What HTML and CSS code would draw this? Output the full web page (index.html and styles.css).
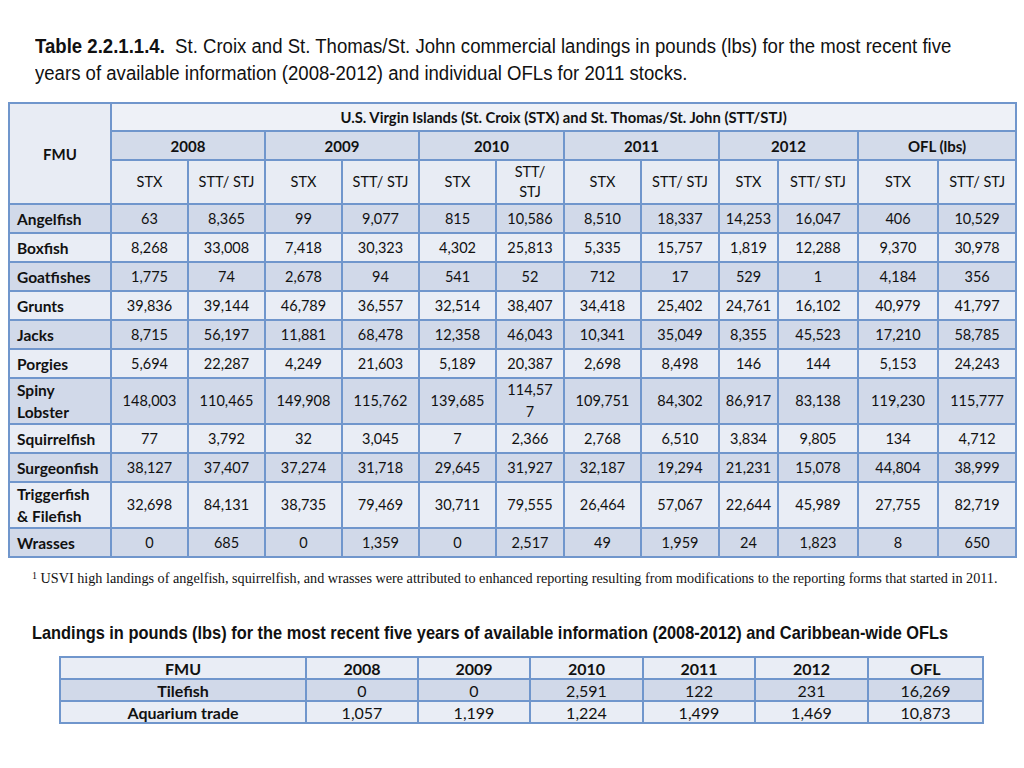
FILE: index.html
```html
<!DOCTYPE html>
<html>
<head>
<meta charset="utf-8">
<link rel="stylesheet" href="styles.css">
</head>
<body>
<div class="page">
  <h1 class="title"><span class="line"><b>Table 2.2.1.1.4.</b>&nbsp; St. Croix and St. Thomas/St. John commercial landings in pounds (lbs) for the most recent five</span><span class="line">years of available information (2008-2012) and individual OFLs for 2011 stocks.</span></h1>

  <table class="main">
    <colgroup>
      <col class="c-fmu"><col class="c77"><col class="c77"><col class="c77"><col class="c77"><col class="c77"><col class="c68"><col class="c77"><col class="c78"><col class="c59"><col class="c80"><col class="c80"><col class="c78">
    </colgroup>
    <tr class="r-top">
      <td class="fmu-head" rowspan="3">FMU</td>
      <td class="usvi" colspan="12">U.S. Virgin Islands (St. Croix (STX) and St. Thomas/St. John (STT/STJ)</td>
    </tr>
    <tr class="r-year">
      <td colspan="2">2008</td><td colspan="2">2009</td><td colspan="2">2010</td><td colspan="2">2011</td><td colspan="2">2012</td><td colspan="2">OFL (lbs)</td>
    </tr>
    <tr class="r-sub">
      <td>STX</td><td>STT/ STJ</td><td>STX</td><td>STT/ STJ</td><td>STX</td><td class="wrap">STT/ STJ</td><td>STX</td><td>STT/ STJ</td><td>STX</td><td>STT/ STJ</td><td>STX</td><td>STT/ STJ</td>
    </tr>
    <tr class="dark"><th>Angelfish</th><td>63</td><td>8,365</td><td>99</td><td>9,077</td><td>815</td><td>10,586</td><td>8,510</td><td>18,337</td><td>14,253</td><td>16,047</td><td>406</td><td>10,529</td></tr>
    <tr class="light"><th>Boxfish</th><td>8,268</td><td>33,008</td><td>7,418</td><td>30,323</td><td>4,302</td><td>25,813</td><td>5,335</td><td>15,757</td><td>1,819</td><td>12,288</td><td>9,370</td><td>30,978</td></tr>
    <tr class="dark"><th>Goatfishes</th><td>1,775</td><td>74</td><td>2,678</td><td>94</td><td>541</td><td>52</td><td>712</td><td>17</td><td>529</td><td>1</td><td>4,184</td><td>356</td></tr>
    <tr class="light"><th>Grunts</th><td>39,836</td><td>39,144</td><td>46,789</td><td>36,557</td><td>32,514</td><td>38,407</td><td>34,418</td><td>25,402</td><td>24,761</td><td>16,102</td><td>40,979</td><td>41,797</td></tr>
    <tr class="dark"><th>Jacks</th><td>8,715</td><td>56,197</td><td>11,881</td><td>68,478</td><td>12,358</td><td>46,043</td><td>10,341</td><td>35,049</td><td>8,355</td><td>45,523</td><td>17,210</td><td>58,785</td></tr>
    <tr class="light"><th>Porgies</th><td>5,694</td><td>22,287</td><td>4,249</td><td>21,603</td><td>5,189</td><td>20,387</td><td>2,698</td><td>8,498</td><td>146</td><td>144</td><td>5,153</td><td>24,243</td></tr>
    <tr class="dark tall"><th>Spiny<br>Lobster</th><td>148,003</td><td>110,465</td><td>149,908</td><td>115,762</td><td>139,685</td><td class="w">114,577</td><td>109,751</td><td>84,302</td><td>86,917</td><td>83,138</td><td>119,230</td><td>115,777</td></tr>
    <tr class="light"><th>Squirrelfish</th><td>77</td><td>3,792</td><td>32</td><td>3,045</td><td>7</td><td>2,366</td><td>2,768</td><td>6,510</td><td>3,834</td><td>9,805</td><td>134</td><td>4,712</td></tr>
    <tr class="dark"><th>Surgeonfish</th><td>38,127</td><td>37,407</td><td>37,274</td><td>31,718</td><td>29,645</td><td>31,927</td><td>32,187</td><td>19,294</td><td>21,231</td><td>15,078</td><td>44,804</td><td>38,999</td></tr>
    <tr class="light tall"><th>Triggerfish<br>&amp; Filefish</th><td>32,698</td><td>84,131</td><td>38,735</td><td>79,469</td><td>30,711</td><td>79,555</td><td>26,464</td><td>57,067</td><td>22,644</td><td>45,989</td><td>27,755</td><td>82,719</td></tr>
    <tr class="dark"><th>Wrasses</th><td>0</td><td>685</td><td>0</td><td>1,359</td><td>0</td><td>2,517</td><td>49</td><td>1,959</td><td>24</td><td>1,823</td><td>8</td><td>650</td></tr>
  </table>

  <p class="note"><sup>1</sup> USVI high landings of angelfish, squirrelfish, and wrasses were attributed to enhanced reporting resulting from modifications to the reporting forms that started in 2011.</p>

  <h2 class="sub-title"><span class="line">Landings in pounds (lbs) for the most recent five years of available information (2008-2012) and Caribbean-wide OFLs</span></h2>

  <table class="small">
    <colgroup>
      <col class="s-fmu"><col class="s112"><col class="s112"><col class="s113"><col class="s112"><col class="s113"><col class="s115">
    </colgroup>
    <tr class="light head"><td>FMU</td><td>2008</td><td>2009</td><td>2010</td><td>2011</td><td>2012</td><td>OFL</td></tr>
    <tr class="dark"><th>Tilefish</th><td>0</td><td>0</td><td>2,591</td><td>122</td><td>231</td><td>16,269</td></tr>
    <tr class="light"><th>Aquarium trade</th><td>1,057</td><td>1,199</td><td>1,224</td><td>1,499</td><td>1,469</td><td>10,873</td></tr>
  </table>
</div>
</body>
</html>
```

FILE: styles.css
```css
html, body {
  margin: 0;
  padding: 0;
  background: #ffffff;
}

.page {
  width: 1024px;
  height: 768px;
  overflow: hidden;
  padding-top: 33px;
  box-sizing: border-box;
}

.title {
  margin: 0 0 0 35px;
  font-family: "Liberation Sans", Arial, sans-serif;
  font-weight: normal;
  font-size: 20px;
  line-height: 27px;
  color: #111111;
}

.title .line {
  display: block;
  white-space: nowrap;
  transform: scaleX(0.929);
  transform-origin: left center;
}

.title b {
  font-weight: bold;
}

table {
  border-collapse: collapse;
  table-layout: fixed;
  font-family: Lato, "Open Sans", sans-serif;
  color: #111111;
}

.main {
  margin: 15px 0 0 8px;
  width: 1007px;
  font-size: 14.5px;
}

.main td, .main th {
  border: 2px solid #7096cc;
  text-align: center;
  vertical-align: middle;
  padding: 0 3px;
  line-height: 22px;
}

.main th {
  text-align: left;
  font-weight: bold;
  font-size: 15.5px;
  padding-left: 7px;
  line-height: 22px;
}

.main td.w {
  padding: 0 9px;
  word-break: break-all;
}

.main td.wrap {
  padding: 0 9px;
}

.c-fmu { width: 102px; }
.c77 { width: 77px; }
.c68 { width: 68px; }
.c78 { width: 78px; }
.c59 { width: 59px; }
.c80 { width: 80px; }

.r-top td { height: 26px; }
.r-year td { height: 27px; font-weight: bold; font-size: 15px; background: #d3dbea; }
.r-sub td { height: 42px; line-height: 20px; background: #e8ecf4; }

.fmu-head {
  background: #e8ecf4;
  font-weight: bold;
  font-size: 15px;
}

.usvi {
  background: #eef1f7;
  font-weight: bold;
  font-size: 14.8px;
}

.main tr.dark td, .main tr.dark th { background: #d1d9e9; }
.main tr.light td, .main tr.light th { background: #e9edf5; }

.main tr.dark, .main tr.light { height: 29px; }
.main tr.tall { height: 45px; }

.note {
  margin: 12px 0 0 32px;
  font-family: "Liberation Serif", "Times New Roman", serif;
  font-size: 14.2px;
  line-height: 16px;
  white-space: nowrap;
  color: #111111;
}

.note sup {
  font-size: 10px;
  vertical-align: 4px;
  line-height: 0;
}

.sub-title {
  margin: 35px 0 0 32px;
  font-family: "Liberation Sans", Arial, sans-serif;
  font-weight: bold;
  font-size: 18.5px;
  line-height: 24px;
  color: #111111;
}

.sub-title .line {
  display: block;
  white-space: nowrap;
  transform: scaleX(0.885);
  transform-origin: left center;
}

.small {
  margin: 11px 0 0 59px;
  width: 923px;
  font-size: 16px;
}

.small td, .small th {
  border: 2px solid #7096cc;
  text-align: center;
  padding: 0;
  height: 20px;
  line-height: 19px;
}

.small th, .small .head td {
  font-weight: bold;
}

.small tr.dark td, .small tr.dark th { background: #d1d9e9; }
.small tr.light td, .small tr.light th { background: #e9edf5; }

.s-fmu { width: 246px; }
.s112 { width: 112px; }
.s113 { width: 113px; }
.s115 { width: 115px; }
```
